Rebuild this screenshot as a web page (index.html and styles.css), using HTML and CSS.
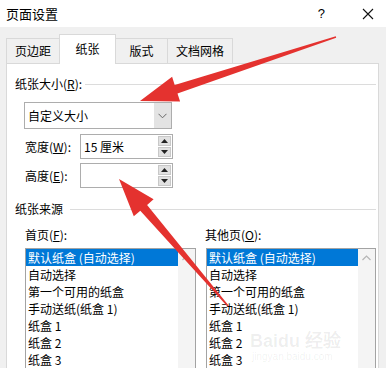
FILE: index.html
```html
<!DOCTYPE html>
<html lang="zh-CN">
<head>
    <meta charset="UTF-8">
    <title>页面设置</title>
    <link rel="stylesheet" href="styles.css">
</head>
<body>
    <div class="dialog">
        <!-- Title bar -->
        <div class="titlebar">
            <span class="title">页面设置</span>
            <span class="help">?</span>
            <svg class="close" width="12" height="12" viewBox="0 0 12 12">
                <path d="M1 1 L11 11 M11 1 L1 11" stroke="#111" stroke-width="1.1"/>
            </svg>
        </div>

        <!-- Tabs -->
        <div class="tabs">
            <div class="tab tab-margins">页边距</div>
            <div class="tab tab-paper active">纸张</div>
            <div class="tab tab-layout">版式</div>
            <div class="tab tab-grid">文档网格</div>
        </div>

        <div class="panel">
            <div class="group-head">
                <span>纸张大小(<u>R</u>):</span>
                <i class="rule"></i>
            </div>

            <div class="combo">
                <span class="combo-text">自定义大小</span>
                <span class="combo-btn">
                    <svg width="9" height="6" viewBox="0 0 9 6"><path d="M0.5 0.8 L4.5 4.8 L8.5 0.8" fill="none" stroke="#666" stroke-width="1"/></svg>
                </span>
            </div>

            <div class="field">
                <label>宽度(<u>W</u>):</label>
                <div class="spin">
                    <span class="spin-text">15 厘米</span>
                    <div class="spin-btns">
                        <span class="spin-btn"><svg width="7" height="4" viewBox="0 0 7 4"><path d="M0 4 L3.5 0 L7 4 Z" fill="#222"/></svg></span>
                        <span class="spin-btn"><svg width="7" height="4" viewBox="0 0 7 4"><path d="M0 0 L3.5 4 L7 0 Z" fill="#222"/></svg></span>
                    </div>
                </div>
            </div>

            <div class="field field-second">
                <label>高度(<u>E</u>):</label>
                <div class="spin">
                    <span class="spin-text"></span>
                    <div class="spin-btns">
                        <span class="spin-btn"><svg width="7" height="4" viewBox="0 0 7 4"><path d="M0 4 L3.5 0 L7 4 Z" fill="#222"/></svg></span>
                        <span class="spin-btn"><svg width="7" height="4" viewBox="0 0 7 4"><path d="M0 0 L3.5 4 L7 0 Z" fill="#222"/></svg></span>
                    </div>
                </div>
            </div>

            <div class="group-head group-source">
                <span>纸张来源</span>
                <i class="rule"></i>
            </div>

            <div class="sources">
                <div class="source source-first">
                    <label>首页(<u>F</u>):</label>
                    <div class="listbox">
                        <ul class="items">
                            <li class="selected">默认纸盒 (自动选择)</li>
                            <li>自动选择</li>
                            <li>第一个可用的纸盒</li>
                            <li>手动送纸(纸盒 1)</li>
                            <li>纸盒 1</li>
                            <li>纸盒 2</li>
                            <li>纸盒 3</li>
                        </ul>
                        <div class="scrollbar">
                            <svg width="9" height="6" viewBox="0 0 9 6"><path d="M0.5 5 L4.5 1 L8.5 5" fill="none" stroke="#b5b5b5" stroke-width="1.2"/></svg>
                        </div>
                    </div>
                </div>
                <div class="source source-other">
                    <label>其他页(<u>O</u>):</label>
                    <div class="listbox">
                        <ul class="items">
                            <li class="selected">默认纸盒 (自动选择)</li>
                            <li>自动选择</li>
                            <li>第一个可用的纸盒</li>
                            <li>手动送纸(纸盒 1)</li>
                            <li>纸盒 1</li>
                            <li>纸盒 2</li>
                            <li>纸盒 3</li>
                        </ul>
                        <div class="scrollbar">
                            <svg width="9" height="6" viewBox="0 0 9 6"><path d="M0.5 5 L4.5 1 L8.5 5" fill="none" stroke="#b5b5b5" stroke-width="1.2"/></svg>
                        </div>
                    </div>
                </div>
            </div>
        </div>

        <!-- Watermark -->
        <div class="watermark">
            <span class="wm-big">Bai<b>du</b> 经验</span>
            <span class="wm-small">jingyan.baidu.com</span>
        </div>

        <!-- Red annotation arrows -->
        <svg class="marks" width="386" height="368" viewBox="0 0 386 368">
            <polygon points="140,101 180.1,101.6 177.5,93.5 336.2,37.8 335.8,36.2 174.7,84.9 172.1,76.8" fill="#e4322f"/>
            <polygon points="119,179 153.6,199.3 147.1,204.9 228.6,305.5 227.4,306.5 140.3,210.7 133.8,216.3" fill="#e4322f"/>
        </svg>
    </div>
</body>
</html>
```

FILE: styles.css
```css
* {
    margin: 0;
    padding: 0;
    box-sizing: border-box;
}

body {
    width: 386px;
    height: 368px;
    overflow: hidden;
    background: #f0f0f0;
    font-family: "Noto Sans CJK SC", "Microsoft YaHei", sans-serif;
    font-size: 12px;
    color: #000;
}

.dialog {
    position: relative;
    width: 386px;
    height: 368px;
    overflow: hidden;
}

/* Title bar */
.titlebar {
    height: 27px;
    background: #fff;
    display: flex;
    align-items: center;
    padding-left: 6px;
}

.title {
    font-size: 13px;
    line-height: 16px;
    flex: 1;
}

.help {
    font-family: "Liberation Sans", sans-serif;
    font-size: 13px;
    margin-right: 37px;
}

.close {
    margin-right: 12px;
}

/* Tabs */
.tabs {
    height: 36px;
    display: flex;
    align-items: flex-end;
    padding-left: 6px;
}

.tab {
    height: 25px;
    line-height: 24px;
    text-align: center;
    border: 1px solid #d9d9d9;
    border-bottom: none;
    background: #f0f0f0;
    margin-left: -1px;
}

.tab-margins { width: 54px; margin-left: 0; }
.tab-paper { width: 57px; }
.tab-layout { width: 53px; }
.tab-grid { width: 66px; }

.tab.active {
    height: 30px;
    line-height: 28px;
    background: #fff;
    margin-bottom: -1px;
    position: relative;
    z-index: 1;
}

/* Panel */
.panel {
    margin-left: 6px;
    width: 373px;
    height: 320px;
    background: #fff;
    border: 1px solid #d9d9d9;
    padding: 0 2px 0 8px;
}

.group-head {
    display: flex;
    align-items: center;
    height: 16px;
    line-height: 16px;
    margin-top: 12px;
}

.group-head .rule {
    flex: 1;
    height: 1px;
    background: #dcdcdc;
    margin-left: 3px;
}

.group-source {
    margin-top: 13px;
}

.group-source .rule {
    margin-left: 7px;
}

/* Combo box */
.combo {
    margin: 10px 0 0 9px;
    width: 148px;
    height: 27px;
    border: 1px solid #adadad;
    display: flex;
    align-items: stretch;
}

.combo-text {
    flex: 1;
    line-height: 25px;
    padding-left: 3px;
}

.combo-btn {
    width: 17px;
    background: #e3e3e3;
    display: flex;
    align-items: center;
    justify-content: center;
}

/* Spin fields */
.field {
    display: flex;
    align-items: center;
    margin: 5px 0 0 10px;
}

.field-second {
    margin-top: 4px;
}

.field label {
    width: 55px;
    line-height: 16px;
}

.spin {
    width: 93px;
    height: 25px;
    border: 1px solid #adadad;
    display: flex;
    align-items: center;
    padding: 1px;
}

.spin-text {
    flex: 1;
    padding-left: 2px;
    line-height: 16px;
}

.spin-btns {
    display: flex;
    flex-direction: column;
    gap: 1px;
    height: 21px;
}

.spin-btn {
    width: 13px;
    height: 10px;
    background: #e1e1e1;
    border: 1px solid #c8c8c8;
    display: flex;
    align-items: center;
    justify-content: center;
}

/* Paper source lists */
.sources {
    display: flex;
    gap: 10px;
    margin-left: 10px;
}

.source label {
    display: block;
    margin-top: 10px;
    line-height: 16px;
}

.source-first { width: 171px; }
.source-other { width: 170px; }

.source-other label {
    margin-left: -1px;
}

.listbox {
    margin-top: 5px;
    height: 140px;
    border: 1px solid #a3a3a3;
    display: flex;
}

.items {
    list-style: none;
    flex: 1;
}

.items li {
    height: 17px;
    line-height: 17px;
    padding-left: 2px;
    white-space: nowrap;
}

.items li.selected {
    background: #0078d7;
    color: #fff;
}

.scrollbar {
    width: 17px;
    background: #f4f4f4;
    display: flex;
    justify-content: center;
    padding-top: 6px;
}

/* Overlays */
.watermark {
    position: absolute;
    left: 250px;
    top: 331px;
    display: flex;
    flex-direction: column;
    color: rgba(0, 0, 0, 0.07);
    pointer-events: none;
}

.wm-big {
    font-family: "Liberation Sans", sans-serif;
    font-size: 18px;
    font-weight: bold;
    line-height: 20px;
}

.wm-small {
    font-family: "Liberation Sans", sans-serif;
    font-size: 10px;
    line-height: 12px;
    margin-left: 2px;
}

.marks {
    position: absolute;
    top: 0;
    left: 0;
    pointer-events: none;
}
```
